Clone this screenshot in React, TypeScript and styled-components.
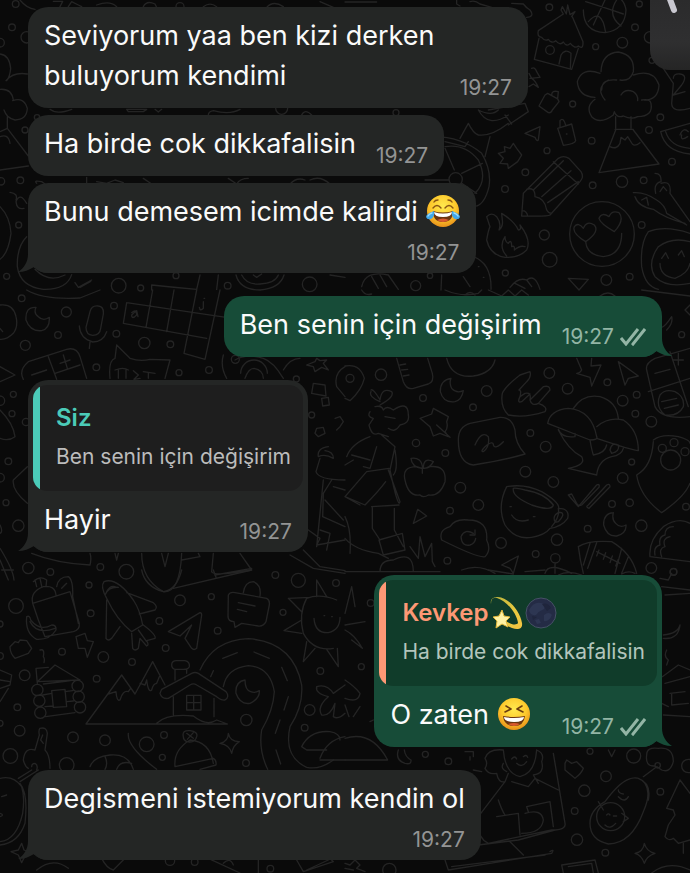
import React from "react";
import styled, { createGlobalStyle } from "styled-components";

const GlobalStyle = createGlobalStyle`
  * { box-sizing: border-box; }
  html { background: #0a0a0a; }
  body { margin: 0; font-family: Inter, "Noto Sans", sans-serif; color: #fafafa; }
`;

const Screen = styled.main`
  position: relative;
  isolation: isolate;
  min-height: 100vh;
  overflow: hidden;
  background: #0a0a0a;
`;

const WallpaperSvg = styled.svg`
  position: absolute;
  inset: 0;
  z-index: -1;
  width: 100%;
  height: 100%;
  fill: none;
  stroke: #242424;
  stroke-width: 4;
  stroke-linecap: round;
  stroke-linejoin: round;
`;

const Thread = styled.div`
  display: flex;
  flex-direction: column;
  gap: 23px;
  padding: 7px 28px 13px;
`;

const Group = styled.section<{ $out?: boolean }>`
  display: flex;
  flex-direction: column;
  align-items: ${(p) => (p.$out ? "flex-end" : "flex-start")};
  gap: 7px;
`;

const BubbleBox = styled.article<{ $out?: boolean }>`
  position: relative;
  max-width: 500px;
  border-radius: 20px;
  background: ${(p) => (p.$out ? "#174c38" : "#242625")};
`;

const TailSvg = styled.svg<{ $out?: boolean }>`
  position: absolute;
  bottom: 0;
  ${(p) => (p.$out ? "right: -10px; transform: scaleX(-1);" : "left: -10px;")}
  width: 30px;
  height: 22px;
  fill: ${(p) => (p.$out ? "#174c38" : "#242625")};
`;

const Body = styled.div<{ $stacked?: boolean }>`
  display: flex;
  flex-direction: ${(p) => (p.$stacked ? "column" : "row")};
  align-items: flex-end;
  justify-content: space-between;
  gap: ${(p) => (p.$stacked ? "5px" : "20px")};
  padding: 9px 16px 8px;
`;

const Text = styled.p`
  margin: 0;
  padding-bottom: 4px;
  font-size: 27px;
  line-height: 40px;
`;

const Meta = styled.footer<{ $out?: boolean }>`
  display: flex;
  flex: none;
  align-items: center;
  gap: 6px;
  font-size: 21px;
  line-height: 24px;
  color: ${(p) => (p.$out ? "#93b5a5" : "#939494")};
`;

const Quote = styled.blockquote<{ $out?: boolean; $accent: string }>`
  position: relative;
  overflow: hidden;
  display: flex;
  flex-direction: column;
  gap: 8px;
  margin: 5px 5px 0;
  padding: 17px 12px 19px 23px;
  border-radius: 14px;
  color: ${(p) => (p.$out ? "#b3c5bc" : "#bcbcbc")};
  background: linear-gradient(
    to right,
    ${(p) => p.$accent} 7px,
    ${(p) => (p.$out ? "#103c2a" : "#1e1e1e")} 7px
  );
`;

const Author = styled.strong<{ $color: string }>`
  display: flex;
  align-items: center;
  height: 32px;
  font-size: 24px;
  font-weight: 600;
  line-height: 32px;
  color: ${(p) => p.$color};
`;

const QuoteText = styled.span`
  font-size: 21px;
  line-height: 30px;
`;

const EmojiSvg = styled.svg`
  width: 34px;
  height: 34px;
  flex: none;
  vertical-align: -7px;
`;

const TickSvg = styled.svg`
  width: 26px;
  height: 18px;
  fill: none;
  stroke: currentColor;
  stroke-width: 3;
`;

const FloatingButton = styled.button`
  position: absolute;
  top: 0;
  right: 0;
  width: 40px;
  height: 70px;
  padding: 0;
  border: 0;
  border-radius: 0 0 0 20px;
  background: linear-gradient(#2b2b2c, #2f2f30 60%, #252525);
`;

const ButtonGlyph = styled.svg`
  display: block;
  width: 40px;
  height: 70px;
  stroke: #c9c8d0;
  stroke-width: 6;
  stroke-linecap: round;
`;

function Tail({ out }: { out?: boolean }) {
  return (
    <TailSvg $out={out} viewBox="0 0 30 22" aria-hidden="true">
      <path d="M10 0V3C10 11 6 17 0 21C6 21 11 19 16 16C19 19 24 22 30 22V0Z" />
    </TailSvg>
  );
}

function Ticks() {
  return (
    <TickSvg viewBox="0 0 26 18" role="img" aria-label="İletildi">
      <path d="M1 10L6 16L18 1M12 15L13 16L25 1" />
    </TickSvg>
  );
}

function FaceBase({ id }: { id: string }) {
  return (
    <>
      <defs>
        <radialGradient id={id} cx="50%" cy="35%" r="65%">
          <stop offset="0" stopColor="#ffe94f" />
          <stop offset=".6" stopColor="#fdc92c" />
          <stop offset="1" stopColor="#e8901a" />
        </radialGradient>
      </defs>
      <circle cx="17" cy="17" r="16" fill={`url(#${id})`} />
    </>
  );
}

function JoyEmoji() {
  return (
    <EmojiSvg viewBox="0 0 34 34" role="img" aria-label="😂">
      <FaceBase id="joyFace" />
      <path d="M7 14Q11 9 15 14M19 14Q23 9 27 14M8 8Q9 6 12 6M26 8Q25 6 22 6" fill="none" stroke="#8a5514" strokeWidth="1.4" strokeLinecap="round" />
      <path d="M7 17Q17 20 27 17Q27 28 17 28Q7 28 7 17Z" fill="#6b3510" />
      <path d="M8 18Q17 21 26 18Q26 23 17 23Q8 23 8 18Z" fill="#fff" />
      <path d="M11 26Q17 23 23 26Q20 28 17 28T11 26Z" fill="#d9592f" />
      <path d="M8 17Q9 23 5 25Q1 26 0 23Q0 20 8 17ZM26 17Q25 23 29 25Q33 26 34 23Q34 20 26 17Z" fill="#3fa7ea" />
      <path d="M6 19Q3 20 2 22M28 19Q31 20 32 22" stroke="#9bdcfb" strokeWidth="1.4" fill="none" strokeLinecap="round" />
    </EmojiSvg>
  );
}

function LaughEmoji() {
  return (
    <EmojiSvg viewBox="0 0 34 34" role="img" aria-label="😆">
      <FaceBase id="laughFace" />
      <path d="M9 9L14 12L8 15M25 9L20 12L26 15" fill="none" stroke="#6b3d0f" strokeWidth="1.6" strokeLinecap="round" strokeLinejoin="round" />
      <path d="M6 19Q17 21 28 19Q27 29 17 29Q7 29 6 19Z" fill="#6b3510" />
      <path d="M7 20Q17 22 27 20Q27 25 17 25Q7 25 7 20Z" fill="#fff" />
      <path d="M11 27Q17 25 23 27Q20 29 17 29T11 27Z" fill="#d9592f" />
    </EmojiSvg>
  );
}

function DizzyEmoji() {
  return (
    <EmojiSvg viewBox="0 0 34 34" role="img" aria-label="💫">
      <defs>
        <linearGradient id="trail" x1="0" y1="0" x2="1" y2="1">
          <stop offset="0" stopColor="#b8b23d" />
          <stop offset=".6" stopColor="#eac93f" />
          <stop offset="1" stopColor="#f3c443" />
        </linearGradient>
      </defs>
      <path d="M2 8C1 3 4 1 9 1C20 2 31 15 33 27C34 33 29 34 23 32L12 27L14 23C20 28 27 30 29 27C28 18 18 5 8 2C4 1 2 3 2 8Z" fill="url(#trail)" />
      <path d="M13 14L15 20L21 21L17 25L19 31L13 28L7 32L8 25L4 21L10 20Z" fill="#fff2a3" stroke="#e3b83a" strokeWidth="1" />
    </EmojiSvg>
  );
}

function NewMoonEmoji() {
  return (
    <EmojiSvg viewBox="0 0 34 34" role="img" aria-label="🌑">
      <circle cx="18" cy="17" r="15" fill="#242b45" stroke="#465166" strokeWidth="1" />
      <path d="M6 14Q11 5 18 7Q24 8 21 13Q16 15 13 19Q7 20 6 14ZM21 19Q26 15 29 19Q26 26 21 25ZM12 24L16 23L18 27L14 28Z" fill="#2d3652" />
      <path d="M19 8Q25 6 28 12L24 15ZM9 20L14 21L10 24Z" fill="#1f253c" />
    </EmojiSvg>
  );
}

/** Small circles scattered between the drawings: [cx, cy, r]. */
const DOTS: number[][] = [
  [47, 12, 10], [36, 82, 10], [0, 128, 13], [80, 112, 17], [75, 390, 9], [111, 352, 8], [61, 541, 10], [3, 544, 11], [56, 675, 9],
  [20, 829, 9], [356, 857, 22], [422, 864, 9], [528, 827, 9], [683, 857, 10], [929, 853, 22], [540, 20, 12], [845, 325, 18],
  [1648, 22, 10], [1918, 12, 9], [1905, 82, 10], [1787, 140, 9], [1867, 128, 16], [1950, 112, 17], [1956, 181, 9], [1718, 312, 9],
  [1775, 422, 10], [1641, 452, 9], [1576, 517, 10], [1515, 567, 10], [1778, 556, 10], [1866, 545, 17], [1931, 541, 10], [2016, 485, 10],
  [1981, 352, 10], [1947, 390, 10], [1925, 675, 10], [1633, 705, 15], [1649, 779, 22], [1516, 819, 9], [1819, 840, 16], [1889, 830, 10],
  [1247, 857, 15], [1290, 827, 8], [1188, 338, 9], [65, 895, 10], [199, 936, 15], [342, 917, 10], [174, 1005, 10], [349, 1001, 10],
  [76, 1036, 15], [433, 1029, 17], [511, 1033, 10], [289, 1102, 10], [537, 1118, 9], [627, 1110, 10], [0, 1202, 14], [40, 1183, 9],
  [36, 1241, 9], [78, 1266, 11], [25, 1384, 10], [0, 1433, 13], [18, 1508, 9], [55, 1577, 17], [85, 1704, 17], [151, 1716, 10],
  [301, 1701, 10], [379, 1715, 22], [826, 1725, 10], [895, 1741, 21], [935, 1245, 9], [889, 1137, 9], [706, 1078, 12],
  [1143, 1124, 17], [1269, 1194, 10], [1460, 1173, 16], [1419, 1222, 10], [1648, 1119, 16], [1703, 1166, 16], [1822, 1147, 10],
  [1910, 1184, 10], [1868, 1202, 16], [1906, 1241, 10], [1954, 1265, 16], [1591, 1299, 10], [1637, 1340, 16], [1248, 1329, 11],
  [1336, 1359, 10], [1381, 1463, 16], [1576, 1415, 16], [1660, 1446, 16], [1435, 1515, 16], [1350, 1532, 10], [1503, 1629, 16],
  [1671, 1619, 17], [1607, 1662, 10], [1342, 1682, 10], [1763, 1586, 10], [1836, 1512, 10], [1889, 1508, 11], [1868, 1434, 16],
  [1924, 1577, 17], [1954, 1704, 16], [2021, 1715, 10], [1895, 1386, 9], [2045, 1004, 9], [2058, 1520, 10],
  [48, 1818, 22], [267, 1755, 9], [272, 1840, 10], [540, 1801, 16], [634, 1790, 9], [478, 1863, 10], [653, 1892, 10], [849, 1837, 9],
  [0, 1872, 9], [0, 1968, 10], [186, 1955, 10], [310, 1971, 16], [396, 1986, 10], [497, 1944, 10], [290, 2036, 10], [74, 2026, 16],
  [52, 2122, 10], [0, 2170, 9], [59, 2192, 16], [219, 2212, 16], [315, 2221, 16], [440, 2233, 22], [492, 2205, 10], [487, 2272, 9],
  [31, 2268, 22], [200, 2295, 22], [739, 2160, 17], [738, 2289, 10], [929, 2130, 16], [914, 2183, 10], [961, 2013, 10], [1008, 1749, 10],
  [584, 2586, 10], [811, 2606, 10], [510, 2582, 14], [1276, 2263, 9], [1345, 2284, 10], [1770, 2254, 9], [1901, 2268, 21], [1818, 2329, 16],
  [1753, 2372, 17], [1724, 2433, 10], [1731, 2519, 17], [1816, 2558, 10], [1981, 2375, 10], [2065, 2298, 20], [1084, 2000, 9], [1112, 1809, 10],
  [2020, 1716, 10], [1168, 2610, 20],
];

/** Line drawings, grouped by the section of the wallpaper they belong to. */
const DOODLES: { x: number; y: number; paths: string[] }[] = [
  {
    x: 0,
    y: 0,
    paths: [
      "M0 162Q28 165 32 205Q30 230 20 242M18 242Q40 215 82 222M0 268Q35 265 40 300M38 302Q72 290 82 325Q80 360 45 360Q20 355 12 330M22 350V385L0 395M0 410Q25 400 30 430M22 385L85 468M0 510L85 498",
      "M30 577Q55 580 48 600M80 610Q60 575 48 605Q50 630 72 625M0 620Q30 650 33 700Q25 760 0 778",
      "M80 710Q50 740 52 800Q60 860 130 868Q200 870 215 824M105 808Q145 850 195 825M225 848L235 862L275 840M240 862L272 844",
      "M60 0Q80 25 105 28M160 4H188L178 24M205 20L215 5L235 15L245 20M290 15Q330 0 350 20M430 20Q440 0 465 12L470 22M610 20Q630 5 650 20M800 22Q820 0 850 20M960 5L1000 22",
      "M150 328Q170 345 215 328M380 328H440L430 335H385ZM465 328L475 336L485 328M625 345Q625 335 640 332Q690 345 720 328M905 345Q915 325 935 345",
      "M110 550Q100 540 125 545L135 552M260 532V552M290 545L320 550L345 540L370 548M430 535L455 552M685 535L710 552Q720 535 745 535M870 552Q890 530 915 540M930 540Q960 525 990 552",
      "M455 870V855Q520 862 590 868L600 825M655 825L650 868M708 825Q720 870 780 870Q840 865 852 825M725 825Q740 855 780 852Q825 850 835 825M760 825L770 832L785 822M990 825L1035 832",
    ],
  },
  {
    x: 1035,
    y: 0,
    paths: [
      "M0 6H95M335 0V12L345 18M375 5Q390 0 405 12L440 22M500 10L535 12Q545 25 555 30Q570 50 545 52M715 30Q715 95 780 98Q840 90 843 30Q840 10 830 0M722 5Q770 20 835 42M780 0L745 75M730 65Q770 20 782 98M815 0Q785 45 828 78",
      "M655 42L580 92Q575 110 590 112Q600 125 610 118Q620 132 632 122Q645 138 655 126Q665 142 676 130Q690 148 700 138Q715 150 714 125L682 50M655 42L648 30L652 20L664 42L668 15L675 44L690 35L680 50M582 115L568 178L680 208L700 145M602 150A13 13 0 1 0 628 150A13 13 0 1 0 602 150M642 192L648 165Q660 145 678 160L676 205",
      "M768 215Q770 160 820 156Q870 165 865 215Q855 245 825 240M765 220Q710 200 697 245Q700 290 750 292M790 240Q750 265 780 300M770 270Q770 235 815 240M865 225Q925 205 942 255Q940 300 898 300M750 298Q720 320 740 350Q765 375 805 345L808 335Q815 355 835 348Q860 360 878 350Q925 350 918 310Q915 295 890 300M828 285Q840 265 865 275Q880 285 878 302M812 350V385M858 350V385M810 388H865M812 390L762 518L942 492L865 390M795 440Q815 450 825 430L828 412L840 420L848 410L862 432Q870 440 885 428",
      "M955 205L985 250L980 310Q980 340 1035 325M985 235Q985 220 1005 222Q1030 225 1010 255L985 285L1020 275M947 395Q960 455 1035 462M947 395L1035 370M962 395Q975 440 1035 445M1005 405Q1015 380 1030 395M1010 405Q1005 425 1028 410",
      "M552 220L560 235Q570 240 580 262L565 252L552 260M560 205Q570 200 575 215L585 232L555 235M600 285L582 318L610 338Q618 340 622 330L642 305Q640 295 630 292L608 280ZM620 285Q620 270 640 275L638 295",
      "M540 400L585 380L580 420Q575 425 570 412ZM638 385L680 372L692 422Q690 432 655 436ZM645 380V362Q655 350 662 375M664 402H666M460 460L480 455L478 440L495 445L505 430L515 445L530 465L518 485L490 505L488 492L465 490L475 475Z",
      "M535 580L640 475Q655 465 672 475L708 515Q718 530 705 545L615 645Q610 650 530 648ZM565 570L655 482M590 590L678 512M608 608L700 545M545 568Q570 560 570 590Q600 595 605 630Q610 640 620 640M532 632Q545 632 548 648M625 485L700 552",
      "M400 330Q430 385 490 345M430 330L540 310L550 335L490 375M480 345L500 372M400 330Q440 350 460 330M490 370Q440 410 400 405Q385 400 370 370L345 415M435 410L420 470M265 410Q350 410 410 460Q440 510 432 560Q420 610 395 618M300 440Q360 430 400 480Q430 540 390 580M300 445L328 510M350 520L412 490M350 550L395 580M312 538A20 20 0 1 0 352 538A20 20 0 1 0 312 538M240 540H312M300 425L360 440L370 425",
      "M425 650Q440 635 455 650Q470 670 462 690Q475 680 472 660Q470 640 470 640Q510 665 520 690Q530 690 525 675Q560 720 545 750Q520 775 480 772Q435 765 425 720Q430 690 435 680ZM485 768Q460 740 480 710Q480 725 490 730Q500 715 500 740Q510 735 508 750Q525 735 540 740",
      "M674 702A97 97 0 1 0 868 702A97 97 0 1 0 674 702M722 725Q680 700 688 680Q700 665 715 685Q725 660 748 675Q765 695 722 725ZM808 695Q765 670 762 655Q770 635 792 650Q800 630 822 638Q840 660 808 695ZM722 725Q725 765 775 770Q830 765 830 700",
      "M865 578Q900 575 935 600Q960 615 965 640L1025 675M870 590Q880 620 925 628Q960 655 1020 670M930 520Q950 520 948 545Q925 550 932 580M948 550Q980 540 975 580L1035 665M945 575L955 560L965 572M890 600L905 592L910 615",
      "M1035 700Q960 675 910 695Q885 730 890 800Q900 860 940 868M1035 725Q980 710 940 740Q905 790 930 830Q965 865 1035 850M950 775L962 758L970 775M1000 765L1010 752L1018 770M945 790Q945 830 990 835Q1030 820 1035 790",
      "M50 860Q60 810 130 825L160 868M80 830L100 865M105 825L125 860M385 770Q440 790 438 868M290 825L288 870M355 830L375 860M400 800H402M415 832H417M495 862Q520 830 545 840Q570 820 585 868M670 835L730 838L702 870ZM510 850L540 865M545 840L560 860",
    ],
  },
  {
    x: 0,
    y: 870,
    paths: [
      "M80 0Q130 30 240 24L300 0M0 45Q40 40 48 80Q55 110 40 130Q20 150 0 148M0 115L8 125M108 52Q75 50 78 90Q90 125 125 122Q150 115 148 82Q130 95 115 80Q100 70 108 52M270 65Q275 45 295 48Q312 50 310 72L302 115Q300 135 278 136Q258 135 258 112ZM238 108Q240 145 278 156Q310 155 320 125M270 156L268 175",
      "M380 38L678 82M370 100L620 145M380 38L370 100M458 0L438 112M522 0L500 125M590 0L552 190L615 208L660 0M395 68Q410 55 410 75Q395 90 395 75Q405 65 410 62L414 80M610 35V55Q600 65 598 52M612 25H614",
      "M70 268Q55 240 85 215L200 178Q230 170 240 200L260 265M145 200L170 268M95 255L140 240M180 220L210 210M190 195L202 235M165 250L240 225M0 230L45 255L0 275M330 265Q325 210 345 205L350 165L390 205Q420 215 450 208L510 210L495 265M345 240Q370 230 385 240M355 240V265M378 240V265M400 242L415 255L402 268L420 265M430 245L465 250M445 248V265",
      "M0 360Q40 400 45 440Q25 455 0 445M82 530L40 570Q35 600 82 640M0 705Q10 725 0 730M670 195Q660 230 680 265M705 210Q740 190 790 205Q820 215 850 265M722 250A40 40 0 0 1 802 250M735 265Q745 235 762 235Q790 240 790 265M850 240Q870 205 900 205M920 225L945 215L950 205L960 212L980 210L970 220L985 240L965 232L945 245L940 230ZM940 280L975 285L978 318L935 310ZM965 325L985 322L988 345L968 348ZM950 415L970 412L975 430L955 440L945 430ZM1005 385L1020 380L1030 395L1020 410L1010 420M1035 230Q1000 250 1010 290L1035 320",
      "M985 470Q950 475 955 500Q975 490 1000 505Q1000 485 975 482M960 505L948 545Q955 570 1035 570M970 570L950 770M995 570L970 610L968 680L1035 710M975 630L1030 690M1000 590L1035 600M925 720L960 745L950 765L1035 750M960 720L990 730L980 780M870 795L940 835L1035 850M910 780L960 830L1035 842M0 775Q40 840 42 870M0 810L25 870M5 840H40M95 790Q170 820 270 825Q275 805 270 790M345 790L350 810L355 790M425 790Q425 870 490 905Q540 910 545 790M485 790L495 830L505 790M545 810L600 800L595 790M640 790L635 845Q640 860 755 840L720 790M645 855L755 835",
    ],
  },
  {
    x: 1035,
    y: 870,
    paths: [
      "M0 228Q45 220 58 265Q50 300 15 332L0 325M3 265A12 12 0 1 0 27 265A12 12 0 1 0 3 265M155 205L175 275Q185 300 205 295L250 282Q268 275 262 250L248 205M165 225L182 222M170 240L188 238M175 258L192 255M305 205Q320 265 385 258Q440 250 450 210M318 265Q285 270 286 305Q295 340 330 335Q350 330 355 302Q335 312 320 295Q312 280 318 265",
      "M225 385L260 372L265 355L310 380L305 395Q310 415 300 425L310 440L285 430L265 438L255 410ZM275 405L315 442M78 300Q85 295 105 330Q110 290 140 305Q150 320 105 345M105 335Q70 320 78 305M75 365Q65 380 85 385L72 405Q80 440 100 430L130 440M90 350Q110 345 115 360Q125 345 145 360Q190 330 190 375Q195 400 165 405Q150 430 130 415M120 380L150 385M75 440Q20 460 5 500M95 470L75 535L55 530M0 525L25 510M20 495L75 510M110 435L150 470L135 540Q160 660 165 635L130 540M65 545L132 535M65 545L0 620L60 645Q100 605 122 575M80 650L162 645M82 650V715L105 750M148 655V720L175 770M102 750L172 730L180 780L115 795ZM150 480Q160 540 145 555M0 620L45 645",
      "M180 570Q170 530 215 530Q240 540 255 530Q305 525 300 575Q285 620 250 615Q235 625 225 615Q190 620 180 570ZM232 535V550M230 535Q200 530 198 505Q230 500 233 535M235 535Q235 500 265 515Q255 535 235 535M340 450Q340 410 375 400L465 382Q500 380 510 420Q510 460 540 492Q480 510 385 525Q340 520 340 450ZM390 465Q410 420 430 440Q435 470 415 485Q405 485 420 470Q445 450 445 465Q450 480 475 455",
      "M555 245Q560 260 545 275L522 300Q530 300 525 320L540 310Q560 305 555 330L595 290Q615 285 615 300L580 340Q610 350 600 365Q540 385 490 375Q465 350 472 310Q480 290 525 255ZM525 320Q515 340 530 335L555 312M555 330Q560 350 580 340M695 205L710 240Q705 250 695 250L735 262L740 288L768 225L738 228L740 205M820 215L840 285L850 265L880 258Z",
      "M608 400Q615 360 670 355Q740 360 755 440Q760 450 735 450ZM685 355Q715 310 765 320Q815 335 820 385M755 410Q790 380 835 390Q880 420 880 482Q860 480 755 445M640 418Q650 445 690 440V430M640 420Q670 480 710 500Q725 525 670 535L755 555Q760 510 800 500Q830 495 835 475M735 450Q740 480 745 495Q780 490 785 465M795 480Q800 455 820 465Q825 485 800 490Z",
      "M485 590Q455 650 480 705Q510 750 560 742Q600 735 615 715Q650 710 668 685Q675 655 640 655Q645 680 620 710M485 590Q540 580 590 605Q650 640 640 660M505 595Q500 620 560 645Q620 665 625 645Q600 610 540 600Q510 592 505 595M628 680Q625 700 640 695Q660 675 650 668Q635 665 628 680M495 650H499M565 680H570M500 675Q515 700 550 690M670 615L700 650L755 585Q765 580 762 592L710 645Q700 650 695 640L680 612ZM730 645Q720 650 732 655L795 590Q795 580 785 585Z",
      "M205 700L218 658L245 678ZM290 750Q280 720 315 710Q330 685 370 690Q430 690 425 750Q440 780 420 800Q400 805 290 750ZM385 730Q360 715 348 740Q350 770 375 765Q390 760 392 745M375 735L390 735V720M195 770L220 805L225 740L240 800L260 760L262 815L270 830M0 745Q30 780 100 790L130 805M105 845Q105 810 145 810Q205 780 205 845M0 845H285M0 680Q20 720 15 790M350 840Q400 820 450 850M470 825L520 798L505 850L495 835ZM600 850Q610 815 680 850M617 805A14 14 0 1 0 645 805A14 14 0 1 0 617 805M630 820V850",
      "M805 668Q775 670 776 705Q785 740 815 738Q845 730 843 705Q825 715 812 700Q800 690 805 668M700 770Q730 750 800 755Q860 790 875 850M700 770Q705 810 715 850M735 760L715 825M755 758L728 835M830 775L810 850M850 800L830 850M755 785L825 820M762 780L755 798M782 788L775 808M802 798L795 818M820 808L812 828M915 800Q910 750 955 710Q1000 680 1035 700M915 800L1035 815M930 795Q925 770 945 765Q940 740 960 735Q960 710 985 710M950 800Q940 775 960 770Q950 745 975 740",
      "M905 240Q900 220 930 205L1035 175M905 240L930 350Q950 390 1035 380M910 305L1035 265M975 185L1030 350M930 250L975 238M1000 190V225M985 210H1015M945 315Q960 295 990 305Q1020 320 1015 350Q1000 380 960 375Q930 350 945 315M950 335L995 325M958 355L1000 345M965 120Q985 100 980 80Q960 110 950 112M1035 45L1020 60L1035 75M925 450Q950 430 1000 440Q1035 450 1035 460M925 455Q920 530 875 555Q885 620 950 668Q1020 620 1035 580M947 510A30 30 0 1 0 1007 510A30 30 0 1 0 947 510M940 475A12 12 0 1 0 964 475A12 12 0 1 0 940 475M975 458A12 12 0 1 0 999 458A12 12 0 1 0 975 458M1008 485A12 12 0 1 0 1032 485A12 12 0 1 0 1008 485",
      "M50 0Q60 18 80 12M300 0Q350 22 400 10L410 0M430 0L470 18L490 0L510 18L530 0L550 15M890 0L1035 18M360 15Q375 0 390 15M765 18Q790 0 810 18",
    ],
  },
  {
    x: 0,
    y: 1710,
    paths: [
      "M98 100L210 65L238 160Q240 180 220 185L135 200L115 150ZM98 100Q90 65 130 50Q165 45 168 75M105 30L110 50M120 25L125 48M100 35Q120 15 140 30L138 50M170 50Q175 20 205 20Q220 30 218 80L235 160M185 55L200 40M80 140Q90 135 92 150Q120 185 155 165Q170 165 168 180Q150 210 110 208Q75 190 80 140ZM90 155Q110 195 165 175",
      "M320 85Q300 50 312 35Q350 20 400 90Q420 120 428 165L395 185Q350 150 320 85ZM315 75Q325 50 355 52M320 65Q330 45 345 50M380 68L460 98Q475 110 465 120L418 132M320 90L318 205Q325 215 335 205L360 170M395 190L398 235Q405 245 415 235L420 205L440 228Q448 225 440 212L465 205Q470 195 430 165M415 180L440 215M505 185L600 128Q605 128 605 135L590 235Q582 242 575 235L555 205L575 165L540 198Q520 190 505 185Z",
      "M425 0Q435 50 490 65Q530 60 545 0M520 55L755 0M640 0L648 22M685 75Q690 65 705 68L800 85Q810 90 808 105L798 155Q790 170 775 168L725 160L705 172L702 155Q685 155 684 140ZM730 68Q735 35 760 35Q785 45 780 78M715 98L765 108M712 118L740 125M30 230L45 215L55 218L60 210L80 212L95 235L85 250L45 265Q30 250 30 230ZM228 200L255 190L262 212L280 215L262 262L255 235H235ZM120 240Q135 235 130 260Q135 265 132 278M0 300L35 315L30 345L0 355M25 355L0 395M0 330L30 335",
      "M112 340L108 295L145 292M112 335L165 285L240 330ZM130 342L215 332M95 360A17 17 0 1 0 129 360A17 17 0 1 0 95 360M101 392A17 17 0 1 0 135 392A17 17 0 1 0 101 392M104 428A17 17 0 1 0 138 428A17 17 0 1 0 104 428M216 348A17 17 0 1 0 250 348A17 17 0 1 0 216 348M219 380A17 17 0 1 0 253 380A17 17 0 1 0 219 380M223 412A17 17 0 1 0 257 412A17 17 0 1 0 223 412M128 375L155 370M135 410L160 408M195 365L218 362M200 395L220 393M155 362L195 358L200 410L160 412ZM137 440L225 428",
      "M258 462L365 315L405 372L458 275L495 345M258 462H682M325 372L348 365Q350 395 360 390Q368 360 385 365L392 355M420 340L435 345L440 330Q445 370 455 360Q460 340 470 340L478 320M485 358L575 310Q585 305 595 310L678 365Q690 380 675 390Q665 392 650 380L590 345Q580 338 570 345L505 385Q485 388 480 370ZM520 380V435M642 385V440M525 330V300M560 310V298M515 285Q515 272 530 272H555Q570 275 568 290Q565 298 550 298H525Q515 295 515 285M560 376H603V420H560ZM581 376V420M560 398H603M470 460Q500 430 580 438Q620 470 650 450L682 462",
      "M600 300Q640 210 745 206Q880 215 905 345Q910 410 870 470Q850 560 920 592Q960 600 1000 570M670 350Q680 295 745 287Q810 290 823 365Q820 420 785 480Q775 540 803 598M668 265L712 248M762 246L808 265M845 292L862 332M865 380L852 420M840 450L826 490M828 540L842 582M632 320L640 302M735 330Q705 335 708 370Q720 405 750 400Q780 385 778 362Q765 370 752 365Q735 360 735 330",
      "M920 85Q960 70 1010 90M920 85Q895 130 910 190Q940 245 1000 235M905 125L865 85L930 82M905 150L852 182L905 190M920 215L910 275L945 235M980 238L1015 290L1012 235M950 80V30L980 80M942 145Q945 190 985 188Q1020 180 1020 142M972 137H974M995 140H997M950 350Q980 340 1000 370L1035 345M950 350Q945 370 985 380Q950 410 965 435Q990 440 1005 400L1000 440Q1015 450 1035 430M905 530Q930 480 990 485Q1020 490 1020 510M905 530L920 540H980M960 565Q980 510 1035 500M960 570H1035",
      "M120 475Q115 480 118 495L105 540M120 475Q140 470 142 490L135 540M128 495L122 510L130 520M105 540Q75 530 70 570Q75 590 85 595M135 540Q150 555 150 595M95 590Q95 580 105 580Q115 585 110 600M55 625L95 600M60 635L115 600M0 625Q40 615 65 650Q75 680 68 730Q50 810 0 815M60 640Q85 670 75 760Q55 820 0 825M5 680L20 675M0 730Q15 735 0 740M33 845L55 840L65 820L72 840L95 850L75 858L65 878L55 855ZM385 490Q380 530 470 598M270 590Q280 560 330 555Q385 550 400 598M315 560Q325 580 315 598M350 598Q360 570 395 580M525 590Q520 540 570 510Q630 515 640 580M525 590L640 565Q650 570 648 585L600 598M550 500Q545 480 570 482Q595 485 590 500Q585 520 560 515Q550 510 550 500M560 490L580 505M580 488L562 508M660 520Q685 515 685 490Q690 515 718 515Q700 525 695 550Q690 525 660 520Z",
      "M110 900Q160 860 205 895M305 865Q320 895 340 900L375 865M625 865L720 909M670 880Q690 860 700 885M775 870V909M890 870L910 905L1000 875L990 865M920 900L985 870",
    ],
  },
  {
    x: 1035,
    y: 1710,
    paths: [
      "M0 130L20 50L30 110M0 165L60 155M0 180Q30 195 52 235L20 210M0 330Q30 350 45 370Q40 400 0 385M0 405L12 440M45 410L25 440M75 455L85 450M0 505Q80 480 128 570H0M160 540Q150 570 180 580Q200 585 198 570Q180 560 178 540M360 545H385V560M375 560V570M430 0L505 12M540 5L600 0M640 15Q670 0 710 15M830 12Q850 0 870 10M945 25L970 30L980 10M950 50L1035 60M960 75L1035 70M955 195Q1000 190 1005 165Q1000 210 955 205M965 240Q955 260 970 270L965 285M952 320L1000 285L1035 300M960 340L1035 320M975 370L1020 365M980 370V405L1030 400M950 400L970 410M955 435L1035 440",
      "M475 540Q480 610 525 620Q570 610 575 540M500 567Q510 555 515 567M535 560Q545 552 548 562M515 580Q530 595 545 575M475 580Q465 595 485 605M475 540Q430 535 420 565Q430 580 420 595Q430 615 455 610Q460 640 480 635L490 610M575 540Q600 550 590 575Q600 610 565 615L580 640M385 600L410 605M480 635L400 740M500 635L550 650L570 625L640 660M460 690Q470 720 480 735M455 740L520 730M545 710L615 695L625 770M520 730L525 795M540 730Q590 715 595 750Q590 790 530 790M545 710L550 725M400 740Q390 800 430 820L620 780Q665 780 660 760L625 550M400 825L520 810L630 780M300 870L310 900L620 850Q630 835 615 845M495 815L535 855M320 890L600 855",
      "M660 580L665 570L680 580L695 575L715 595Q710 610 690 625L660 600ZM790 540L800 560L810 540M905 555Q905 530 940 535Q985 530 985 575Q975 610 950 600L935 590L895 620M905 555Q900 590 930 588M930 586A8 8 0 1 0 946 586A8 8 0 1 0 930 586M850 628Q880 615 900 640Q920 670 895 725Q860 820 790 822Q735 810 735 760Q735 720 780 695Q820 640 850 628ZM880 625Q920 640 910 690M755 740A42 42 0 1 0 839 740A42 42 0 1 0 755 740M785 735Q790 728 795 735M805 738H815M780 765Q795 780 812 760M820 660Q820 670 835 672M820 680Q840 700 850 680M830 730L850 745L835 755M760 695L775 720",
      "M1005 630L965 715L985 720L990 735L970 765L960 800Q970 815 985 805L1000 820L1035 810M1005 630L1035 670M1015 820V850M870 850Q895 845 898 820Q905 845 930 850Q905 858 898 880Q890 855 870 850ZM650 885L750 870L760 909M650 885L655 909M670 890L740 880L745 909M920 909Q970 870 1035 900M0 880L15 885L30 870L45 885L35 895L60 905M0 895L25 900",
    ],
  },
];

function Wallpaper() {
  return (
    <WallpaperSvg viewBox="0 0 2070 2619" preserveAspectRatio="xMidYMin slice" aria-hidden="true">
      {DOTS.map(([cx, cy, r], i) => (
        <circle key={i} cx={cx} cy={cy} r={r} />
      ))}
      {DOODLES.map((group) => (
        <g key={`${group.x}-${group.y}`} transform={`translate(${group.x} ${group.y})`}>
          {group.paths.map((d, i) => (
            <path key={i} d={d} />
          ))}
        </g>
      ))}
    </WallpaperSvg>
  );
}

type BubbleProps = {
  children: React.ReactNode;
  out?: boolean;
  tail?: boolean;
  stacked?: boolean;
  quote?: { author: React.ReactNode; text: string; accent: string };
};

function Bubble({ children, out, tail, stacked, quote }: BubbleProps) {
  return (
    <BubbleBox $out={out}>
      {tail && <Tail out={out} />}
      {quote && (
        <Quote $out={out} $accent={quote.accent}>
          <Author $color={quote.accent}>{quote.author}</Author>
          <QuoteText>{quote.text}</QuoteText>
        </Quote>
      )}
      <Body $stacked={stacked}>
        <Text>{children}</Text>
        <Meta $out={out}>
          <time dateTime="19:27">19:27</time>
          {out && <Ticks />}
        </Meta>
      </Body>
    </BubbleBox>
  );
}

export default function App() {
  return (
    <>
      <GlobalStyle />
      <Screen>
        <Wallpaper />
        <Thread>
          <Group>
            <Bubble>Seviyorum yaa ben kizi derken buluyorum kendimi</Bubble>
            <Bubble>Ha birde cok dikkafalisin</Bubble>
            <Bubble tail stacked>
              Bunu demesem icimde kalirdi <JoyEmoji />
            </Bubble>
          </Group>
          <Group $out>
            <Bubble out tail>Ben senin için değişirim</Bubble>
          </Group>
          <Group>
            <Bubble tail quote={{ author: "Siz", text: "Ben senin için değişirim", accent: "#4bcbb8" }}>
              Hayir
            </Bubble>
          </Group>
          <Group $out>
            <Bubble
              out
              tail
              quote={{
                author: (
                  <>
                    Kevkep
                    <DizzyEmoji />
                    <NewMoonEmoji />
                  </>
                ),
                text: "Ha birde cok dikkafalisin",
                accent: "#fd9875",
              }}
            >
              O zaten <LaughEmoji />
            </Bubble>
          </Group>
          <Group>
            <Bubble tail stacked>Degismeni istemiyorum kendin ol</Bubble>
          </Group>
        </Thread>
        <FloatingButton type="button" aria-label="Aşağı kaydır">
          <ButtonGlyph viewBox="0 0 40 70" aria-hidden="true">
            <path d="M18 -6L24 10" />
          </ButtonGlyph>
        </FloatingButton>
      </Screen>
    </>
  );
}
